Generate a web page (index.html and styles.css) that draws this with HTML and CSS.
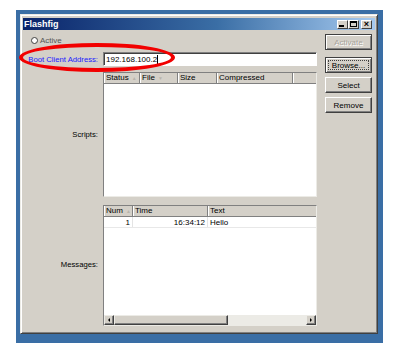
FILE: index.html
```html
<!DOCTYPE html>
<html>
<head>
<meta charset="utf-8">
<link rel="stylesheet" href="styles.css">
</head>
<body>
<div class="desktop">
  <div class="window">
    <div class="titlebar">
      <span class="title">Flashfig</span>
      <div class="tbtns">
        <span class="tb"><span class="g-min"></span></span>
        <span class="tb"><span class="g-max"></span></span>
        <span class="tb close">×</span>
      </div>
    </div>
    <div class="body">
      <div class="form">
        <div class="active-row"><span class="radio"></span><span class="active-text">Active</span></div>
        <div class="lbl blue">Boot Client Address:</div>
        <div class="input">192.168.100.2<span class="caret"></span></div>
        <div class="lbl">Scripts:</div>
        <div class="list">
          <div class="lhead">
            <div class="hc w-status">Status <span class="arr">▲</span></div>
            <div class="hc w-file">File <span class="arr">▼</span></div>
            <div class="hc w-size">Size</div>
            <div class="hc w-comp">Compressed</div>
            <div class="hc fill"></div>
          </div>
        </div>
        <div class="lbl">Messages:</div>
        <div class="list msgs">
          <div class="lhead">
            <div class="hc w-num">Num <span class="arr">▲</span></div>
            <div class="hc w-time">Time</div>
            <div class="hc fill">Text</div>
          </div>
          <div class="lrow">
            <div class="rc w-num right">1</div>
            <div class="rc w-time right">16:34:12</div>
            <div class="rc fill">Hello</div>
          </div>
          <div class="spacer"></div>
          <div class="hscroll">
            <div class="sbtn"><span class="tri-l"></span></div>
            <div class="thumb"></div>
            <div class="track"></div>
            <div class="sbtn"><span class="tri-r"></span></div>
          </div>
        </div>
      </div>
      <div class="buttons">
        <div class="btn default disabled">Activate</div>
        <div class="btn focus"><span class="focusbox">Browse...</span></div>
        <div class="btn">Select</div>
        <div class="btn">Remove</div>
      </div>
    </div>
  </div>
</div>
<div class="highlight"></div>
</body>
</html>
```
FILE: styles.css
```css
* { box-sizing: border-box; }
body {
  margin: 0;
  background: #fff;
  font-family: "Liberation Sans", Arial, sans-serif;
  font-size: 7.7px;
  color: #000;
}
.desktop {
  margin: 10px 0 0 16px;
  width: 367px;
  height: 333px;
  background: #3a6ea5;
  padding: 4px 5px 9px 4px;
}
.window {
  height: 100%;
  background: #d4d0c8;
  border: 1px solid;
  border-color: #ecebe6 #404040 #404040 #ecebe6;
  box-shadow: inset 1px 1px #fff, inset -1px -1px #808080;
  padding: 2px;
  display: flex;
  flex-direction: column;
}
.titlebar {
  height: 12px;
  margin-top: 1px;
  background: linear-gradient(to right, #0a246a 0%, #3a6ea5 55%, #a6caf0 100%);
  display: flex;
  align-items: center;
  justify-content: space-between;
  padding: 0 3px 0 1px;
}
.title {
  color: #fff;
  font-weight: bold;
  font-size: 9px;
}
.tbtns { display: flex; }
.tb {
  width: 11px;
  height: 9px;
  background: #d4d0c8;
  border: 1px solid;
  border-color: #fff #404040 #404040 #fff;
  display: flex;
  align-items: center;
  justify-content: center;
  font-size: 9px;
  font-weight: bold;
  line-height: 1;
}
.tb.close { margin-left: 2px; }
.g-min { width: 5px; height: 2px; background: #000; margin-top: 4px; margin-left: -2px; }
.g-max { width: 7px; height: 6px; border: 1px solid #000; border-top-width: 2px; }
.body {
  display: flex;
  padding-top: 4px;
}
.form {
  display: grid;
  grid-template-columns: 75px 214px;
  column-gap: 5px;
  grid-template-rows: 12px 14px 125px 123px;
  row-gap: 6px;
}
.active-row {
  grid-column: 1 / -1;
  display: flex;
  align-items: center;
  padding-left: 8px;
  gap: 2px;
  color: #555;
  font-size: 8px;
}
.radio {
  width: 7px;
  height: 7px;
  border-radius: 50%;
  border: 1px solid #404040;
  background: #fff;
}
.lbl {
  display: flex;
  align-items: center;
  justify-content: flex-end;
  white-space: nowrap;
}
.lbl.blue { color: #1a1aff; }
.input {
  background: #fff;
  border: 1px solid;
  border-color: #808080 #fff #fff #808080;
  box-shadow: inset 1px 1px #404040;
  display: flex;
  align-items: center;
  padding-left: 2px;
  font-size: 8px;
}
.caret { width: 1px; height: 9px; background: #000; }
.list {
  background: #fff;
  border: 1px solid;
  border-color: #808080 #ecebe6 #ecebe6 #808080;
  display: flex;
  flex-direction: column;
  overflow: hidden;
}
.list.msgs { margin-top: 2px; }
.lhead {
  height: 11px;
  display: flex;
  background: #d4d0c8;
  border-bottom: 1px solid #808080;
  font-size: 8px;
}
.hc {
  border-right: 1px solid #808080;
  box-shadow: inset 1px 0 #fff;
  padding-left: 2px;
  display: flex;
  align-items: center;
  white-space: nowrap;
  line-height: 1;
}
.arr { color: #b8b4ac; font-size: 5px; margin-left: 3px; }
.w-status { width: 36px; }
.w-file { width: 38px; }
.w-size { width: 39px; }
.w-comp { width: 76px; }
.fill { flex: 1; border-right: none; }
.w-num { width: 29px; }
.w-time { width: 75px; }
.lrow {
  height: 11px;
  display: flex;
  border-bottom: 1px solid #e8e8e8;
  color: #000;
  font-size: 8px;
}
.rc {
  display: flex;
  align-items: center;
  padding: 0 2px;
  border-right: 1px solid #e4e4e4;
  white-space: nowrap;
  color: #000;
}
.rc.fill { border-right: none; }
.rc.right { justify-content: flex-end; }
.spacer { flex: 1; }
.hscroll {
  height: 10px;
  display: flex;
  background: #ecebe6;
}
.sbtn, .thumb {
  background: #d4d0c8;
  border: 1px solid;
  border-color: #ecebe6 #404040 #404040 #ecebe6;
  box-shadow: inset -1px -1px #808080;
}
.sbtn {
  width: 10px;
  display: flex;
  align-items: center;
  justify-content: center;
}
.thumb { width: 114px; }
.track { flex: 1; }
.tri-l {
  width: 0; height: 0;
  border-top: 2px solid transparent;
  border-bottom: 2px solid transparent;
  border-right: 2px solid #000;
}
.tri-r {
  width: 0; height: 0;
  border-top: 2px solid transparent;
  border-bottom: 2px solid transparent;
  border-left: 2px solid #000;
}
.buttons {
  margin-left: 8px;
  width: 47px;
  display: flex;
  flex-direction: column;
  gap: 4px;
}
.btn {
  height: 16px;
  background: #d4d0c8;
  border: 1px solid;
  border-color: #fff #404040 #404040 #fff;
  box-shadow: inset -1px -1px #808080;
  display: flex;
  align-items: center;
  justify-content: center;
  font-size: 8px;
}
.btn.default {
  border-color: #404040;
  box-shadow: inset 1px 1px #fff, inset -1px -1px #808080;
  margin-bottom: 3px;
}
.btn.disabled { color: #a8a49c; text-shadow: 1px 1px #fff; }
.btn.focus { border-color: #404040; box-shadow: inset 1px 1px #fff, inset -1px -1px #808080; padding: 2px; }
.focusbox {
  width: 100%;
  height: 100%;
  border: 1px dotted #404040;
  display: flex;
  align-items: center;
  justify-content: center;
}
.highlight {
  position: absolute;
  left: 19px;
  top: 43px;
  width: 156px;
  height: 29px;
  border: 4px solid #f20000;
  border-radius: 50%;
}
```
